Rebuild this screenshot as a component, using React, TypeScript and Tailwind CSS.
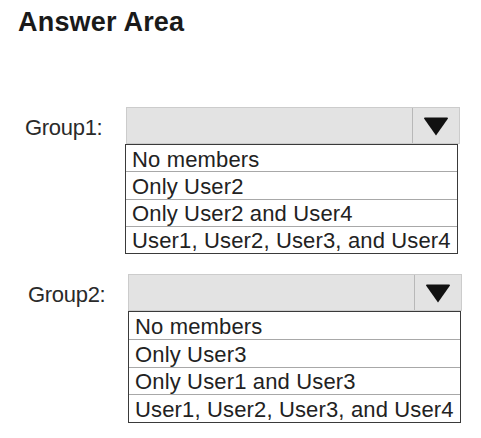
import React from "react";

function Arrow() {
  return (
    <svg width="26" height="19" viewBox="0 0 26 19">
      <path d="M1 1.5 Q1 0.5 2 0.5 L24 0.5 Q25 0.5 25 1.5 L13 18.5 Z" fill="#111" />
    </svg>
  );
}

function Group({
  label,
  items,
  labelPad,
  selectLeft,
  listShift,
  listH,
}: {
  label: string;
  items: string[];
  labelPad: string;
  selectLeft: string;
  listShift: string;
  listH: string;
}) {
  return (
    <div className="flex items-start">
      <div className={`${selectLeft} ${labelPad} h-[37px] flex items-center pt-[3px] text-[22px] text-[#2a2a2a] tracking-[-0.3px] shrink-0`}>
        {label}
      </div>
      <div className="flex flex-col">
        <div className="w-[334px] h-[37px] border border-[#cccccc] bg-[#e3e3e3] flex">
          <div className="flex-1" />
          <div className="w-[47px] h-full border-l border-[#b8b8b8] flex items-center justify-center pt-[2px]">
            <Arrow />
          </div>
        </div>
        <div className={`${listShift} ${listH} w-[333px] border border-[#3a3a3a] flex flex-col bg-white`}>
          {items.map((t, i) => (
            <div
              key={i}
              className={`flex-1 flex items-center pl-[6px] pt-[3px] text-[22px] leading-none text-[#222] tracking-[0.15px] ${
                i > 0 ? "border-t border-[#a8a8a8]" : ""
              }`}
            >
              {t}
            </div>
          ))}
        </div>
      </div>
    </div>
  );
}

export default function App() {
  return (
    <div className="w-[481px] h-[438px] bg-white overflow-hidden font-['Liberation_Sans',Arial,sans-serif]">
      <h1 className="pl-[18px] pt-[9px] text-[27px] font-bold leading-[27px] text-[#1a1a1a] tracking-[0.2px]">
        Answer Area
      </h1>
      <div className="mt-[71px]">
        <Group
          label="Group1:"
          items={["No members", "Only User2", "Only User2 and User4", "User1, User2, User3, and User4"]}
          labelPad="pl-[25px]"
          selectLeft="w-[126px]"
          listShift="-ml-[1px]"
          listH="h-[110px]"
        />
      </div>
      <div className="mt-[20px]">
        <Group
          label="Group2:"
          items={["No members", "Only User3", "Only User1 and User3", "User1, User2, User3, and User4"]}
          labelPad="pl-[28px]"
          selectLeft="w-[128px]"
          listShift="ml-0"
          listH="h-[112px]"
        />
      </div>
    </div>
  );
}
